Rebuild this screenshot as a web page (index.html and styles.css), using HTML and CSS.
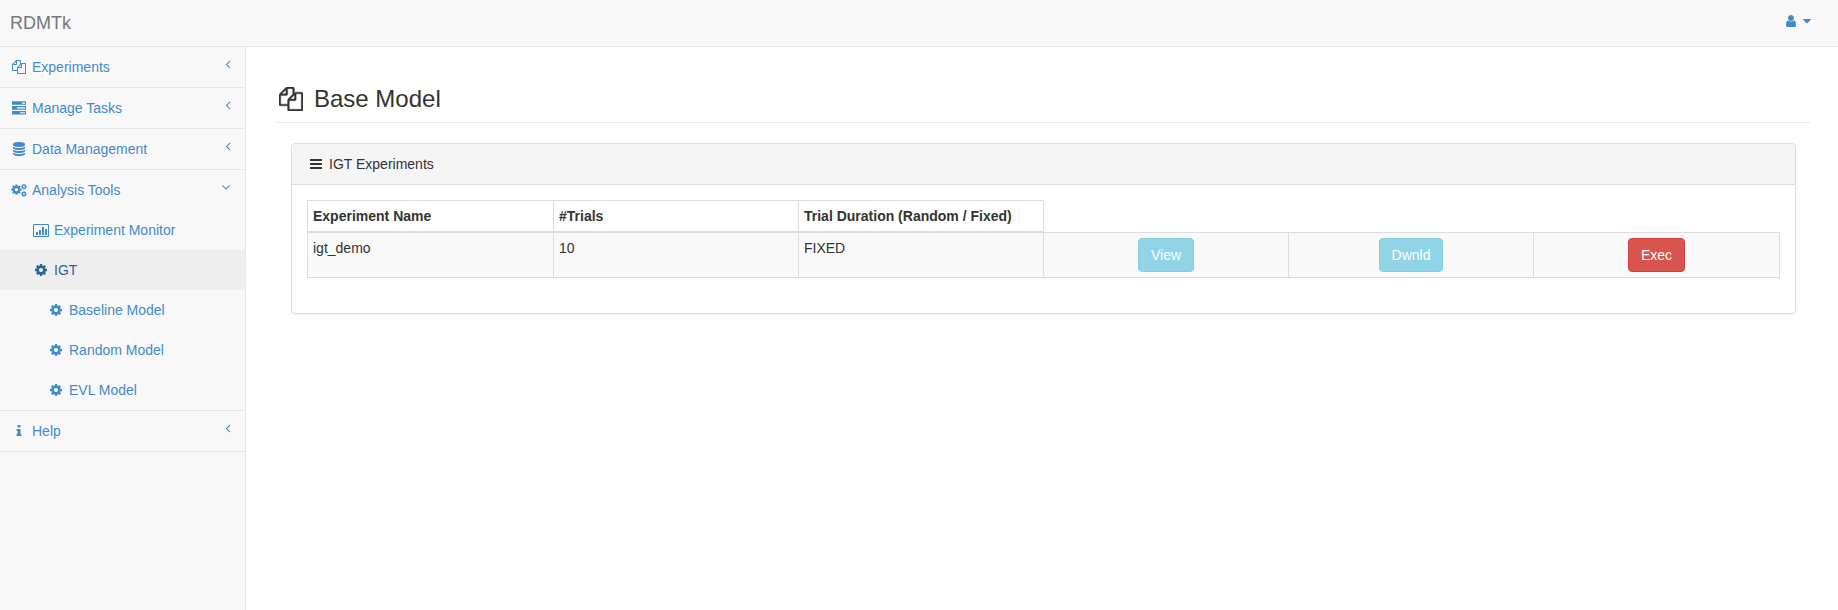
FILE: index.html
```html
<!DOCTYPE html>
<html lang="en">
<head>
<meta charset="utf-8">
<title>RDMTk</title>
<link rel="stylesheet" href="styles.css">
</head>
<body>
<svg class="defs" width="0" height="0" aria-hidden="true">
  <symbol id="i-files" viewBox="0 0 1792 1792"><path d="M1696 384q40 0 68 28t28 68v1216q0 40-28 68t-68 28h-960q-40 0-68-28t-28-68v-288h-544q-40 0-68-28t-28-68v-672q0-40 20-88t48-76l408-408q28-28 76-48t88-20h416q40 0 68 28t28 68v328q68-40 128-40h416zm-544 213l-299 299h299v-299zm-640-384l-299 299h299v-299zm196 647l316-316v-416h-384v416q0 40-28 68t-68 28h-416v640h512v-256q0-40 20-88t48-76zm956 804v-1152h-384v416q0 40-28 68t-68 28h-416v640h896z"/></symbol>
  <symbol id="i-tasks" viewBox="0 0 1792 1792" preserveAspectRatio="none"><path d="M1024 1408h640v-128h-640v128zm-384-512h1024v-128h-1024v128zm640-512h384v-128h-384v128zm512 832v256q0 26-19 45t-45 19h-1664q-26 0-45-19t-19-45v-256q0-26 19-45t45-19h1664q26 0 45 19t19 45zm0-512v256q0 26-19 45t-45 19h-1664q-26 0-45-19t-19-45v-256q0-26 19-45t45-19h1664q26 0 45 19t19 45zm0-512v256q0 26-19 45t-45 19h-1664q-26 0-45-19t-19-45v-256q0-26 19-45t45-19h1664q26 0 45 19t19 45z"/></symbol>
  <symbol id="i-db" viewBox="0 0 1792 1792"><path d="M896 768q237 0 443-43t325-127v170q0 69-103 128t-280 93.5-385 34.5-385-34.5-280-93.5-103-128v-170q119 84 325 127t443 43zm0 768q237 0 443-43t325-127v170q0 69-103 128t-280 93.5-385 34.5-385-34.5-280-93.5-103-128v-170q119 84 325 127t443 43zm0-384q237 0 443-43t325-127v170q0 69-103 128t-280 93.5-385 34.5-385-34.5-280-93.5-103-128v-170q119 84 325 127t443 43zm0-1152q208 0 385 34.5t280 93.5 103 128v128q0 69-103 128t-280 93.5-385 34.5-385-34.5-280-93.5-103-128v-128q0-69 103-128t280-93.5 385-34.5z"/></symbol>
  <symbol id="i-cog" viewBox="0 0 1792 1792"><path d="M1152 896q0-106-75-181t-181-75-181 75-75 181 75 181 181 75 181-75 75-181zm512-109v222q0 12-8 23t-20 13l-185 28q-19 54-39 91 35 50 107 138 10 12 10 25t-9 23q-27 37-99 108t-94 71q-12 0-26-9l-138-108q-44 23-91 38-16 136-29 186-7 28-36 28h-222q-14 0-24.5-8.5t-11.5-21.5l-28-184q-49-16-90-37l-141 107q-10 9-25 9-14 0-25-11-126-114-165-168-7-10-7-23 0-12 8-23 15-21 51-66.5t54-70.5q-27-50-41-99l-183-27q-13-2-21-12.5t-8-23.5v-222q0-12 8-23t19-13l186-28q14-46 39-92-40-57-107-138-10-12-10-24 0-10 9-23 26-36 98.5-107.5t94.5-71.5q13 0 26 10l138 107q44-23 91-38 16-136 29-186 7-28 36-28h222q14 0 24.5 8.5t11.5 21.5l28 184q49 16 90 37l142-107q9-9 24-9 13 0 25 10 129 119 165 170 7 8 7 22 0 12-8 23-15 21-51 66.5t-54 70.5q26 50 41 98l183 28q13 2 21 12.5t8 23.5z"/></symbol>
  <symbol id="i-cogs" viewBox="0 0 1792 1792">
    <use href="#i-cog" x="-60" y="180" width="1340" height="1340"/>
    <use href="#i-cog" x="1090" y="170" width="720" height="720"/>
    <use href="#i-cog" x="1090" y="980" width="720" height="720"/>
  </symbol>
  <symbol id="i-info" viewBox="0 0 1792 1792"><path d="M1216 1344v128q0 26-19 45t-45 19h-512q-26 0-45-19t-19-45v-128q0-26 19-45t45-19h64v-384h-64q-26 0-45-19t-19-45v-128q0-26 19-45t45-19h384q26 0 45 19t19 45v576h64q26 0 45 19t19 45zm-128-1152v192q0 26-19 45t-45 19h-256q-26 0-45-19t-19-45v-192q0-26 19-45t45-19h256q26 0 45 19t19 45z"/></symbol>
  <symbol id="i-bars" viewBox="0 0 1792 1792"><path d="M1664 1344v128q0 26-19 45t-45 19h-1408q-26 0-45-19t-19-45v-128q0-26 19-45t45-19h1408q26 0 45 19t19 45zm0-512v128q0 26-19 45t-45 19h-1408q-26 0-45-19t-19-45v-128q0-26 19-45t45-19h1408q26 0 45 19t19 45zm0-512v128q0 26-19 45t-45 19h-1408q-26 0-45-19t-19-45v-128q0-26 19-45t45-19h1408q26 0 45 19t19 45z"/></symbol>
  <symbol id="i-user" viewBox="0 0 1792 1792"><path d="M1536 1399q0 109-62.5 187t-150.5 78h-854q-88 0-150.5-78t-62.5-187q0-85 8.5-160.5t31.5-152 58.5-131 94-89 134.5-34.5q131 128 313 128t313-128q76 0 134.5 34.5t94 89 58.5 131 31.5 152 8.5 160.5zm-256-887q0 159-112.5 271.5t-271.5 112.5-271.5-112.5-112.5-271.5 112.5-271.5 271.5-112.5 271.5 112.5 112.5 271.5z"/></symbol>
  <symbol id="i-caret" viewBox="0 0 1792 1792"><path d="M1408 704q0 26-19 45l-448 448q-19 19-45 19t-45-19l-448-448q-19-19-19-45t19-45 45-19h896q26 0 45 19t19 45z"/></symbol>
  <symbol id="i-left" viewBox="0 0 1792 1792"><path d="M1203 544q0 13-10 23l-393 393 393 393q10 10 10 23t-10 23l-50 50q-10 10-23 10t-23-10l-466-466q-10-10-10-23t10-23l466-466q10-10 23-10t23 10l50 50q10 10 10 23z"/></symbol>
  <symbol id="i-down" viewBox="0 0 1792 1792"><path d="M1395 736q0 13-10 23l-466 466q-10 10-23 10t-23-10l-466-466q-10-10-10-23t10-23l50-50q10-10 23-10t23 10l393 393 393-393q10-10 23-10t23 10l50 50q10 10 10 23z"/></symbol>
  <symbol id="i-chart" viewBox="0 0 16 13"><path d="M.5.5h15v12H.5z" fill="none" stroke="currentColor"/><path d="M3 8h2v3H3zM6 6h2v5H6zM9 3h2v8H9zM12 5h2v6h-2z"/></symbol>
</svg>

<header class="navbar">
  <a class="brand">RDMTk</a>
  <div class="user-menu">
    <svg class="ic ic-user"><use href="#i-user"/></svg>
    <svg class="ic ic-caret"><use href="#i-caret"/></svg>
  </div>
</header>

<div class="layout">
  <nav class="sidebar">
    <ul class="menu">
      <li class="top-item"><a class="row"><svg class="ic ic-nav"><use href="#i-files"/></svg><span class="label">Experiments</span><svg class="ic ic-arrow"><use href="#i-left"/></svg></a></li>
      <li class="top-item"><a class="row"><svg class="ic ic-nav ic-tasks"><use href="#i-tasks"/></svg><span class="label">Manage Tasks</span><svg class="ic ic-arrow"><use href="#i-left"/></svg></a></li>
      <li class="top-item"><a class="row"><svg class="ic ic-nav"><use href="#i-db"/></svg><span class="label">Data Management</span><svg class="ic ic-arrow"><use href="#i-left"/></svg></a></li>
      <li class="top-item">
        <a class="row"><svg class="ic ic-nav ic-cogs"><use href="#i-cogs"/></svg><span class="label">Analysis Tools</span><svg class="ic ic-arrow ic-arrow-down"><use href="#i-down"/></svg></a>
        <ul class="submenu">
          <li><a class="subrow"><svg class="ic ic-chart"><use href="#i-chart"/></svg>Experiment Monitor</a></li>
          <li><a class="subrow active"><svg class="ic ic-gear"><use href="#i-cog"/></svg>IGT</a></li>
          <li><a class="subrow deep"><svg class="ic ic-gear"><use href="#i-cog"/></svg>Baseline Model</a></li>
          <li><a class="subrow deep"><svg class="ic ic-gear"><use href="#i-cog"/></svg>Random Model</a></li>
          <li><a class="subrow deep"><svg class="ic ic-gear"><use href="#i-cog"/></svg>EVL Model</a></li>
        </ul>
      </li>
      <li class="top-item"><a class="row"><svg class="ic ic-nav"><use href="#i-info"/></svg><span class="label">Help</span><svg class="ic ic-arrow"><use href="#i-left"/></svg></a></li>
    </ul>
  </nav>

  <main class="content">
    <h1 class="page-title"><svg class="ic ic-title"><use href="#i-files"/></svg>Base Model</h1>
    <section class="panel">
      <div class="panel-heading"><svg class="ic ic-bars"><use href="#i-bars"/></svg>IGT Experiments</div>
      <div class="panel-body">
        <table class="grid">
          <colgroup><col class="col-first"><col class="col-mid"><col class="col-mid"><col class="col-mid"><col class="col-mid"><col></colgroup>
          <thead>
            <tr><th>Experiment Name</th><th>#Trials</th><th>Trial Duration (Random / Fixed)</th></tr>
          </thead>
          <tbody>
            <tr>
              <td>igt_demo</td><td>10</td><td>FIXED</td>
              <td class="act"><button class="btn btn-info" disabled>View</button></td>
              <td class="act"><button class="btn btn-info" disabled>Dwnld</button></td>
              <td class="act"><button class="btn btn-danger">Exec</button></td>
            </tr>
          </tbody>
        </table>
      </div>
    </section>
  </main>
</div>
</body>
</html>
```
FILE: styles.css
```css
* { box-sizing: border-box; }
html, body { margin: 0; padding: 0; height: 100%; }
body {
  font-family: "Liberation Sans", Arial, sans-serif;
  font-size: 14px;
  line-height: 20px;
  color: #333;
  background: #fff;
  display: flex;
  flex-direction: column;
  overflow: hidden;
}
.defs { position: absolute; }
.ic { display: block; flex: none; fill: currentColor; }

.navbar {
  height: 47px;
  flex: none;
  display: flex;
  align-items: center;
  justify-content: space-between;
  padding: 0 24px 0 10px;
  background: #f8f8f8;
  border-bottom: 1px solid #e7e7e7;
}
.brand { font-size: 18px; color: #777; }
.user-menu { display: flex; align-items: center; gap: 2px; color: #428bca; margin-top: -4px; }
.ic-user { width: 14px; height: 14px; }
.ic-caret { width: 14px; height: 14px; }

.layout { flex: 1; display: flex; min-height: 0; }
.sidebar {
  width: 246px;
  flex: none;
  background: #f8f8f8;
  border-right: 1px solid #e7e7e7;
}
.menu, .submenu { list-style: none; margin: 0; padding: 0; }
.top-item { border-bottom: 1px solid #e7e7e7; }
.row {
  height: 40px;
  display: flex;
  align-items: center;
  padding: 0 15px 0 12px;
  color: #428bca;
}
.ic-nav { width: 14px; height: 14px; margin-right: 6px; }
.ic-tasks { height: 17px; }
.ic-cogs { width: 16px; height: 16px; margin-left: -1px; margin-right: 5px; }
.label { flex: 1; }
.ic-arrow { width: 14px; height: 14px; margin: -7px -5px 0 0; }
.ic-arrow-down { margin-right: -3px; }

.subrow {
  height: 40px;
  display: flex;
  align-items: center;
  padding-left: 34px;
  color: #428bca;
}
.subrow.deep { padding-left: 49px; }
.subrow.active { background: #eee; color: #2a6496; }
.ic-chart { width: 16px; height: 13px; margin-left: -1px; margin-right: 5px; }
.ic-gear { width: 14px; height: 14px; margin-right: 6px; }

.content { flex: 1; min-width: 0; padding: 0 27px 0 30px; }
.page-title {
  display: flex;
  align-items: center;
  margin: 40px 0 20px;
  padding: 0 0 11px 0;
  height: 24px;
  font-size: 24px;
  line-height: 24px;
  font-weight: 500;
  color: #333;
  border-bottom: 1px solid #eee;
  box-sizing: content-box;
}
.ic-title { width: 24px; height: 24px; margin: 0 11px 0 3px; stroke: currentColor; stroke-width: 30; }

.panel {
  margin: 0 15px;
  height: 171px;
  border: 1px solid #ddd;
  border-radius: 4px;
  box-shadow: 0 1px 1px rgba(0, 0, 0, .05);
}
.panel-heading {
  height: 41px;
  display: flex;
  align-items: center;
  padding: 0 15px 0 17px;
  background: #f5f5f5;
  border-bottom: 1px solid #ddd;
  border-radius: 3px 3px 0 0;
}
.ic-bars { width: 14px; height: 14px; margin-right: 6px; }
.panel-body { padding: 15px; }

.grid {
  width: 100%;
  table-layout: fixed;
  border-collapse: collapse;
  border-spacing: 0;
}
.col-first { width: 246px; }
.col-mid { width: 245px; }
.grid th, .grid td {
  border: 1px solid #ddd;
  padding: 5px;
  text-align: left;
  vertical-align: top;
}
.grid thead th { border-bottom-width: 2px; font-weight: 700; }
.grid tbody tr { background: #f9f9f9; }
.grid td.act { text-align: center; }

.btn {
  display: inline-block;
  height: 34px;
  padding: 6px 12px;
  font: inherit;
  color: #fff;
  border: 1px solid transparent;
  border-radius: 4px;
  vertical-align: middle;
}
.btn-info { background: #5bc0de; border-color: #46b8da; opacity: .65; }
.btn-danger { background: #d9534f; border-color: #d43f3a; }
```
